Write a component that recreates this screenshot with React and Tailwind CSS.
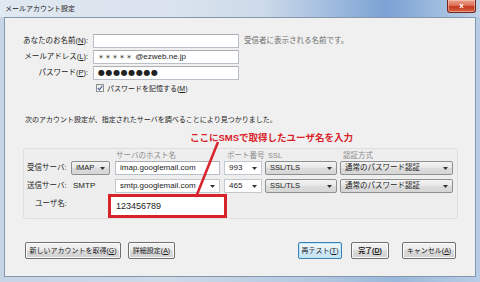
import React from "react";

const F = "font-['Liberation_Sans','Noto_Sans_CJK_JP',sans-serif]";

function Arrow() {
  return (
    <svg width="5" height="3" viewBox="0 0 5 3" className="shrink-0">
      <path d="M0 0 L5 0 L2.5 3 Z" fill="#333" />
    </svg>
  );
}

function SelectBox({ w, children }) {
  return (
    <div
      className={`${w} h-[14px] shrink-0 flex items-center justify-between pl-[4px] pr-[4px] rounded-[2px] border border-[#8e8f8f] bg-[linear-gradient(#f4f4f4,#e6e6e6_50%,#dcdcdc_50%,#d6d6d6)] text-[7.5px] text-[#222]`}
    >
      <span className="leading-none">{children}</span>
      <Arrow />
    </div>
  );
}

function Combo({ w, children }) {
  return (
    <div
      className={`${w} h-[14px] shrink-0 flex items-center justify-between pl-[4px] pr-[4px] bg-white border border-[#c3c8cf] text-[8px] text-[#222]`}
    >
      <span className="leading-none">{children}</span>
      <Arrow />
    </div>
  );
}

function TextInput({ w, children, cls = "" }) {
  return (
    <div
      className={`${w} h-[14px] shrink-0 flex items-center pl-[4px] bg-white border border-[#b9bfc8] border-t-[#abadb3] text-[8px] text-[#222] ${cls}`}
    >
      <span className="leading-none">{children}</span>
    </div>
  );
}

function Btn({ w, children, focus, bold }) {
  return (
    <div
      className={`${w} h-[17px] shrink-0 flex items-center justify-center rounded-[2px] border text-[7px] leading-none text-[#1a1a1a] ${
        focus
          ? "border-[#3c7fb1] bg-[linear-gradient(#eef7fc,#e3f1fa_50%,#cfe8f7_50%,#c6e3f6)] shadow-[inset_0_0_0_1px_#bfe7f8]"
          : "border-[#707070] bg-[linear-gradient(#f2f2f2,#ebebeb_50%,#dddddd_50%,#cfcfcf)] shadow-[inset_0_0_0_1px_#fbfbfb]"
      } ${bold ? "font-bold" : ""}`}
    >
      {children}
    </div>
  );
}

export default function App() {
  return (
    <div
      className={`relative w-[480px] h-[282px] overflow-hidden ${F} bg-[linear-gradient(90deg,#c6d4e4_0%,#cdd9e7_35%,#b4c9e1_65%,#9ab8da_82%,#b8cde5_100%)]`}
    >
      {/* title bar */}
      <div className="flex h-[17px] items-start justify-between pl-[5px] pr-[4px] bg-[linear-gradient(90deg,rgba(227,234,242,0.9)_0%,rgba(227,234,242,0.4)_55%,rgba(90,140,205,0.5)_80%,rgba(227,234,242,0.2)_100%)]">
        <div className="pt-[4px] text-[7px] leading-[9px] text-[#1a1a1a]">メールアカウント設定</div>
        <div className="w-[29px] h-[13px] flex items-center justify-center rounded-b-[3px] border border-t-0 border-[#6e2a20] bg-[linear-gradient(#eba48f,#dc6f55_45%,#c4381c_55%,#d6644a)] text-white text-[8px] font-bold leading-none shadow-[inset_0_0_0_1px_rgba(255,210,200,0.5)]">
          x
        </div>
      </div>

      {/* content */}
      <div className="mx-[4px] h-[260px] border border-[#8497ad] bg-[#f0f0f0] flex flex-col">
        {/* form grid */}
        <div className="mt-[16px] grid grid-cols-[83px_146px_1fr] gap-x-[5px] gap-y-[2px] items-center text-[7.5px] text-[#222]">
          <div className="text-right leading-none">
            あなたのお名前(<u>N</u>):
          </div>
          <TextInput w="w-[146px]"> </TextInput>
          <div className="text-[#6d6d6d] leading-none">受信者に表示される名前です。</div>

          <div className="text-right leading-none">
            メールアドレス(<u>L</u>):
          </div>
          <TextInput w="w-[146px]">
            <span className="text-[6px] tracking-[1px]">＊＊＊＊＊</span> @ezweb.ne.jp
          </TextInput>
          <div />

          <div className="text-right leading-none">
            パスワード(<u>P</u>):
          </div>
          <TextInput w="w-[146px]">
            <span className="text-[8px] tracking-[0.6px] font-['DejaVu_Sans',sans-serif]">●●●●●●●●</span>
          </TextInput>
          <div />

          <div />
          <div className="h-[12px] flex items-center pl-[3px] gap-[3px]">
            <div className="w-[8px] h-[8px] border border-[#8e8f8f] bg-[linear-gradient(#e6e6e6,#fafafa)] flex items-center justify-center">
              <svg width="6" height="6" viewBox="0 0 6 6">
                <path d="M0.8 3.2 L2.4 4.8 L5.2 1" stroke="#4a5f97" strokeWidth="1.2" fill="none" />
              </svg>
            </div>
            <span className="text-[7px] leading-none">
              パスワードを記憶する(<u>M</u>)
            </span>
          </div>
          <div />
        </div>

        {/* info */}
        <div className="mt-[21px] pl-[20px] text-[7px] leading-[10px] text-[#222]">
          次のアカウント設定が、指定されたサーバを調べることにより見つかりました。
        </div>

        {/* annotation */}
        <div className="mt-[7px] pl-[185px] text-[9.5px] leading-[12px] font-bold text-[#d8232a]">
          ここにSMSで取得したユーザ名を入力
        </div>

        {/* panel */}
        <div className="mt-[4px] ml-[18px] w-[435px] h-[71px] rounded-[3px] border border-[#dedede] bg-[#eeeeee] flex flex-col text-[7.5px] text-[#222]">
          <div className="flex pt-[2px] h-[15px] leading-[9px] text-[#8c8c8c]">
            <div className="w-[92px] shrink-0" />
            <div className="w-[111px] shrink-0">サーバのホスト名</div>
            <div className="w-[41px] shrink-0">ポート番号</div>
            <div className="w-[75px] shrink-0">SSL</div>
            <div>認証方式</div>
          </div>

          <div className="flex items-center h-[14px]">
            <div className="w-[47px] shrink-0 pl-[3px] leading-none">受信サーバ:</div>
            <SelectBox w="w-[39px]">IMAP</SelectBox>
            <TextInput w="w-[105px]" cls="ml-[5px]">imap.googlemail.com</TextInput>
            <div className="ml-[4px]"><Combo w="w-[38px]">993</Combo></div>
            <div className="ml-[3px]"><SelectBox w="w-[72px]">SSL/TLS</SelectBox></div>
            <div className="ml-[3px]"><SelectBox w="w-[113px]">通常のパスワード認証</SelectBox></div>
          </div>

          <div className="flex items-center h-[14px] mt-[4px]">
            <div className="w-[47px] shrink-0 pl-[3px] leading-none">送信サーバ:</div>
            <div className="w-[39px] shrink-0 pl-[2px] text-[8px] leading-none">SMTP</div>
            <div className="ml-[5px]"><Combo w="w-[105px]">smtp.googlemail.com</Combo></div>
            <div className="ml-[4px]"><Combo w="w-[38px]">465</Combo></div>
            <div className="ml-[3px]"><SelectBox w="w-[72px]">SSL/TLS</SelectBox></div>
            <div className="ml-[3px]"><SelectBox w="w-[113px]">通常のパスワード認証</SelectBox></div>
          </div>

          <div className="flex items-start mt-[1px]">
            <div className="w-[84px] shrink-0 pl-[11px] pt-[6px] leading-none">ユーザ名:</div>
            <div className="w-[119px] h-[24px] shrink-0 border-[3px] border-[#d8232a] bg-white flex items-center pl-[5px] text-[9px] leading-none text-[#222]">
              123456789
            </div>
          </div>
        </div>

        {/* buttons */}
        <div className="mt-[23px] flex items-center pl-[20px] pr-[19px]">
          <Btn w="w-[96px]">
            新しいアカウントを取得(<u>G</u>)
          </Btn>
          <div className="ml-[7px]">
            <Btn w="w-[47px]">
              詳細設定(<u>A</u>)
            </Btn>
          </div>
          <div className="flex-1" />
          <Btn w="w-[44px]" focus>
            再テスト(<u>T</u>)
          </Btn>
          <div className="ml-[9px]">
            <Btn w="w-[38px]" bold>
              完了(<u>D</u>)
            </Btn>
          </div>
          <div className="ml-[13px]">
            <Btn w="w-[54px]">
              キャンセル(<u>A</u>)
            </Btn>
          </div>
        </div>
      </div>

      {/* annotation line */}
      <svg
        className="absolute left-0 top-0 pointer-events-none"
        width="480"
        height="282"
        viewBox="0 0 480 282"
      >
        <line x1="218" y1="142" x2="196" y2="197" stroke="#d8232a" strokeWidth="2.5" />
      </svg>
    </div>
  );
}
